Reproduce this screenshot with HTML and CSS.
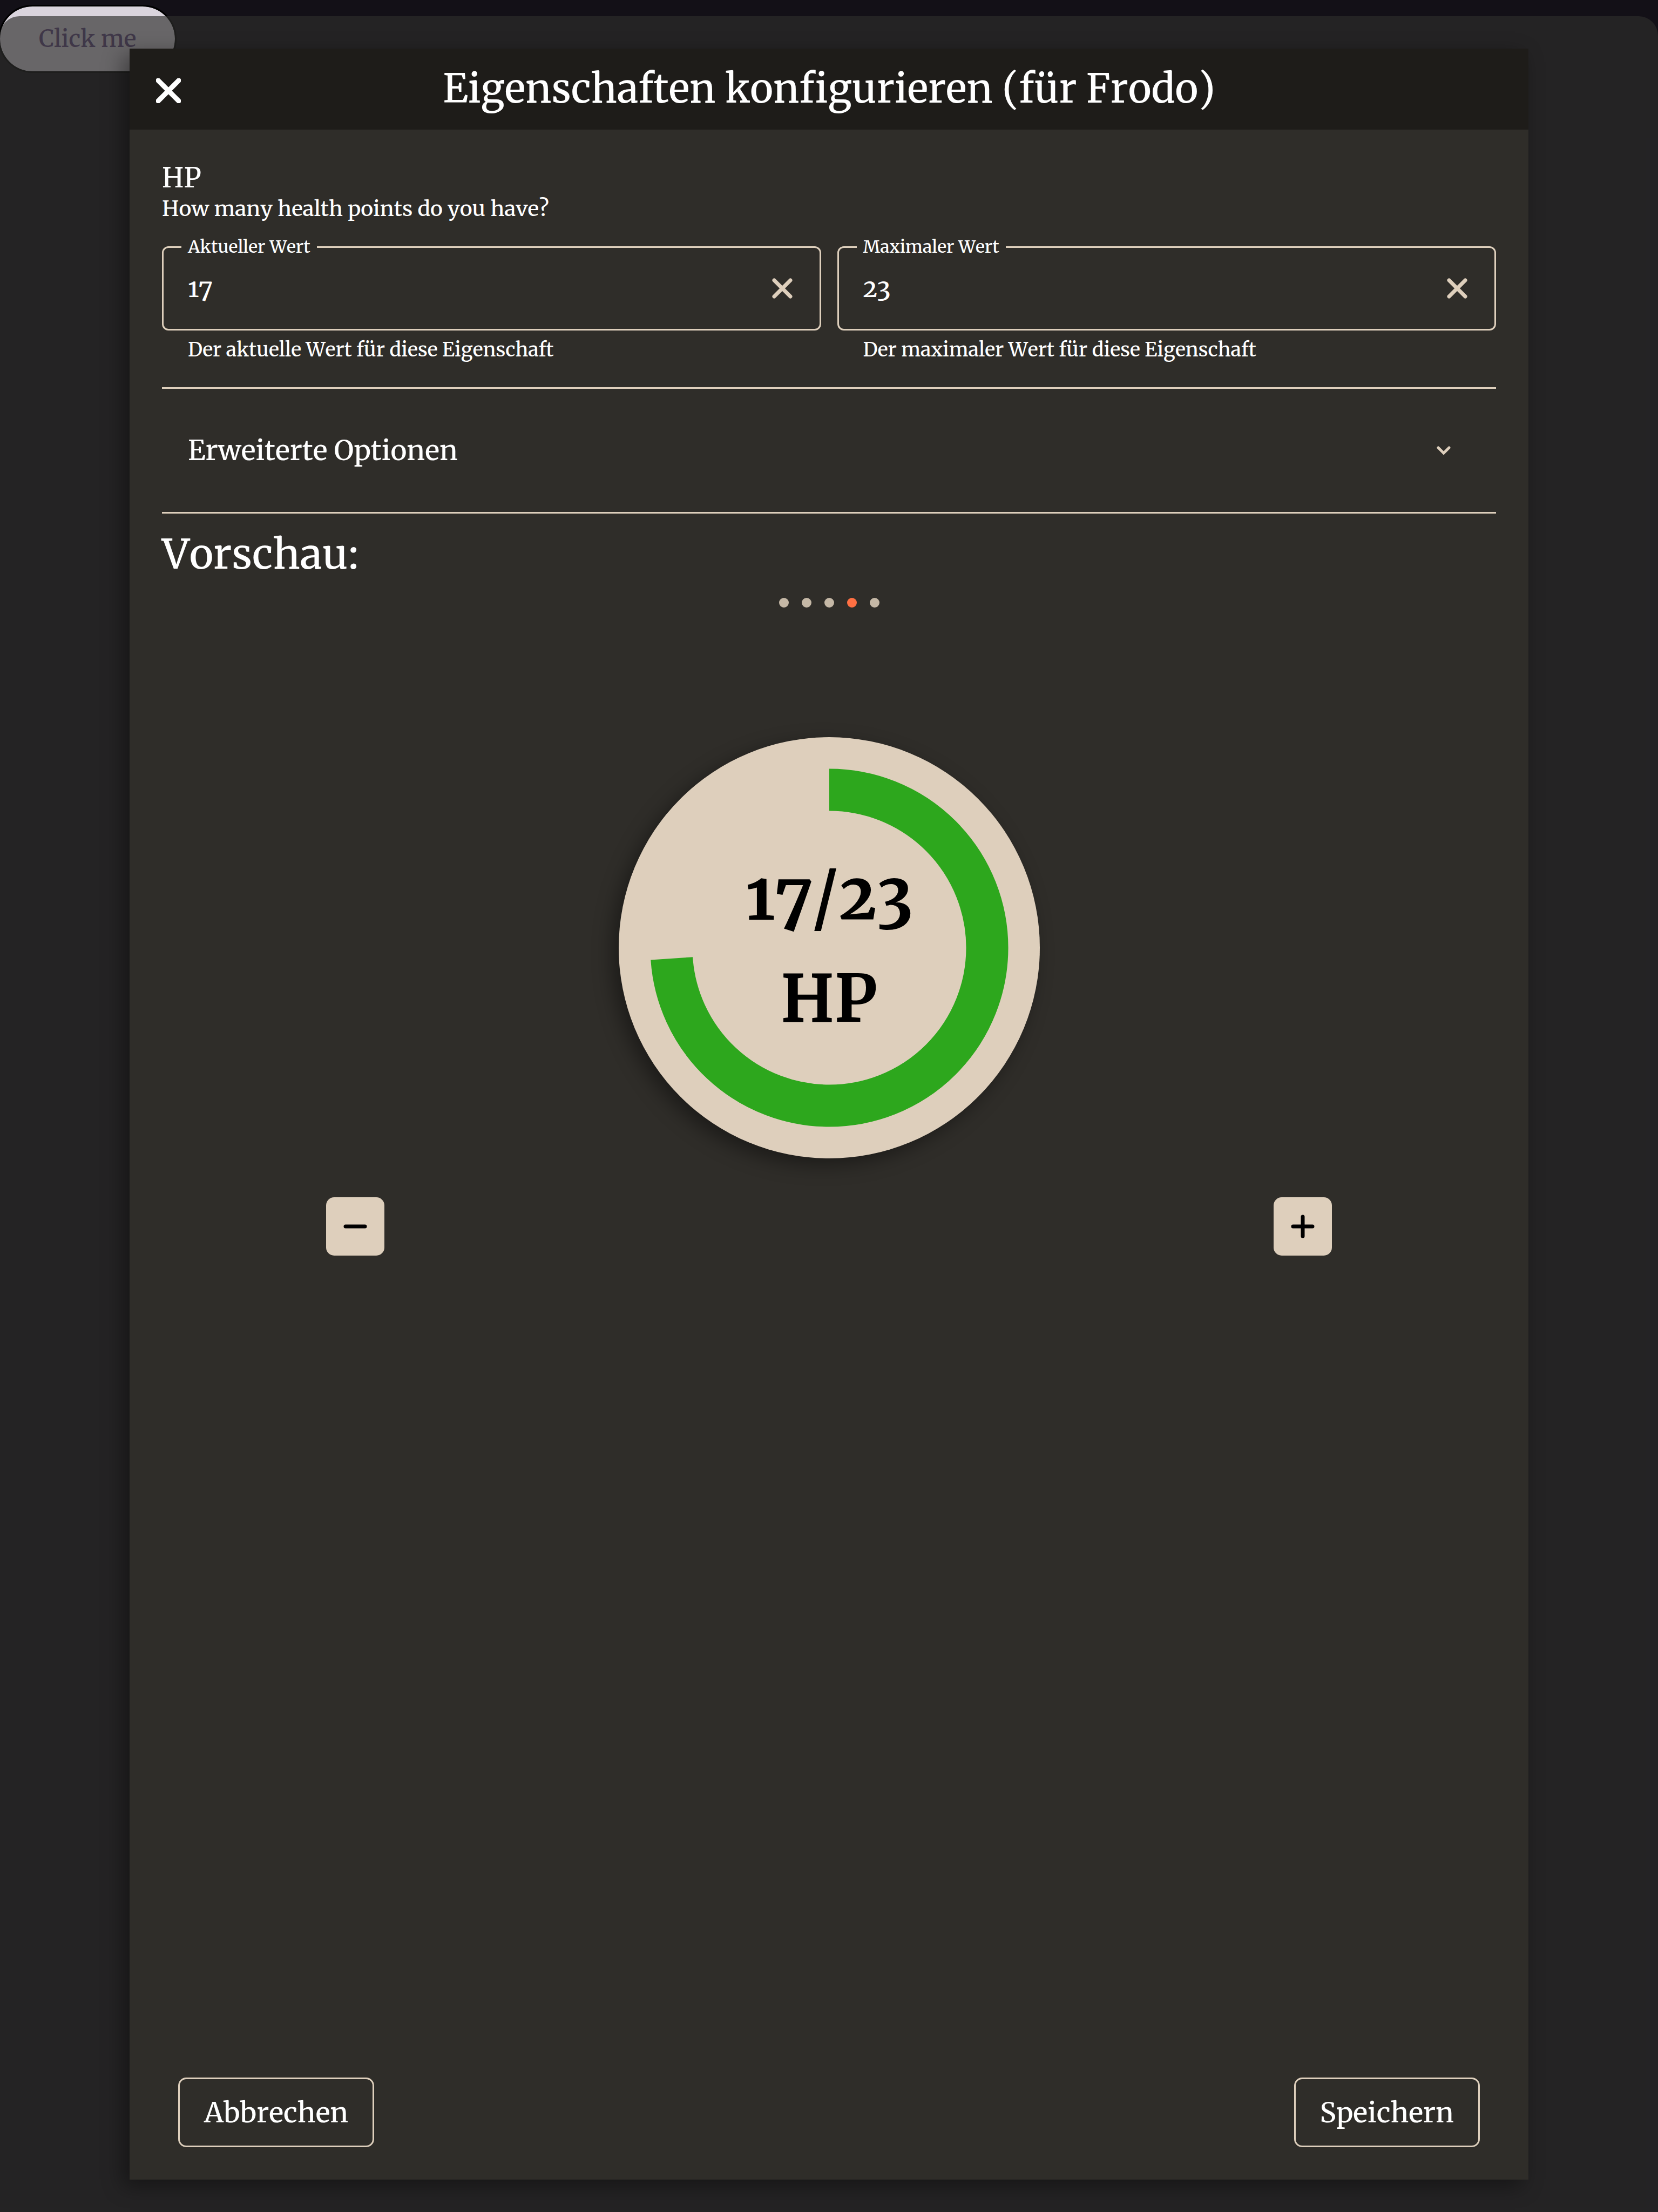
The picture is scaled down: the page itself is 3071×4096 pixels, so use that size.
FILE: index.html
```html
<!DOCTYPE html>
<html lang="de">
<head>
<meta charset="utf-8">
<title>Eigenschaften konfigurieren</title>
<link rel="stylesheet" href="styles.css">
</head>
<body>
<button class="launch" type="button">Click me</button>
<div class="backdrop">
  <section class="dialog" role="dialog" aria-labelledby="dialog-title">
    <header class="dialog-header">
      <button class="icon-button close" type="button" aria-label="Schließen">
        <svg class="icon-close" viewBox="0 0 46 46"><path d="M4 4 42 42M42 4 4 42"/></svg>
      </button>
      <h1 class="dialog-title" id="dialog-title">Eigenschaften konfigurieren (für Frodo)</h1>
    </header>
    <div class="dialog-body">
      <h2 class="property-name">HP</h2>
      <p class="property-text">How many health points do you have?</p>
      <div class="fields">
        <div class="field">
          <fieldset class="field-box">
            <legend class="field-legend"><label for="current">Aktueller Wert</label></legend>
            <div class="field-row">
              <input class="field-input" id="current" type="text" value="17">
              <button class="icon-button" type="button" aria-label="Leeren">
                <svg class="icon-clear" viewBox="0 0 46 46"><path d="M8 8 38 38M38 8 8 38"/></svg>
              </button>
            </div>
          </fieldset>
          <p class="field-help">Der aktuelle Wert für diese Eigenschaft</p>
        </div>
        <div class="field">
          <fieldset class="field-box">
            <legend class="field-legend"><label for="maximum">Maximaler Wert</label></legend>
            <div class="field-row">
              <input class="field-input" id="maximum" type="text" value="23">
              <button class="icon-button" type="button" aria-label="Leeren">
                <svg class="icon-clear" viewBox="0 0 46 46"><path d="M8 8 38 38M38 8 8 38"/></svg>
              </button>
            </div>
          </fieldset>
          <p class="field-help">Der maximaler Wert für diese Eigenschaft</p>
        </div>
      </div>
      <button class="options" type="button" aria-expanded="false">
        <span>Erweiterte Optionen</span>
        <svg class="icon-chevron" viewBox="0 0 26 16"><path d="M3 3 13 13 23 3"/></svg>
      </button>
      <h2 class="preview-title">Vorschau:</h2>
      <div class="dots">
        <span class="dot"></span><span class="dot"></span><span class="dot"></span><span class="dot active"></span><span class="dot"></span>
      </div>
      <div class="gauge">
        <svg class="gauge-ring" viewBox="0 0 780 780">
          <circle cx="390" cy="390" r="292.5" pathLength="23" stroke-dasharray="17 23" transform="rotate(-90 390 390)"/>
        </svg>
        <p class="gauge-text">17/23<br>HP</p>
      </div>
      <div class="steppers">
        <button class="stepper" type="button" aria-label="Weniger">
          <svg class="icon-step" viewBox="0 0 44 44"><path d="M4 22H40"/></svg>
        </button>
        <button class="stepper" type="button" aria-label="Mehr">
          <svg class="icon-step" viewBox="0 0 44 44"><path d="M4 22H40M22 4V40"/></svg>
        </button>
      </div>
      <footer class="actions">
        <button class="action" type="button">Abbrechen</button>
        <button class="action" type="button">Speichern</button>
      </footer>
    </div>
  </section>
</div>
</body>
</html>
```
FILE: styles.css
```css
* {
  box-sizing: border-box;
}

:root {
  --sand: #decfbc;
  --panel: #2f2d29;
  --header: #1e1c19;
}

body {
  margin: 0;
  min-height: 100vh;
  padding-top: 12px;
  background: #131017;
  color: #fff;
  font-family: Merriweather, "DejaVu Serif Condensed", "DejaVu Serif", serif;
  font-size: 36px;
  font-weight: 500;
  font-kerning: none;
  font-optical-sizing: none;
  font-variant-numeric: oldstyle-nums;
}

h1, h2, p {
  margin: 0;
  font-weight: 500;
}

button, input {
  font-family: inherit;
  font-size: inherit;
  font-weight: inherit;
  font-kerning: inherit;
  font-optical-sizing: inherit;
  font-variant-numeric: inherit;
  color: inherit;
  background: none;
  border: 0;
  padding: 0;
}

svg {
  display: block;
  fill: none;
  stroke: currentColor;
}

.launch {
  display: block;
  height: 120px;
  padding: 0 72px;
  border-radius: 60px;
  outline: 3px solid #000;
  background: #dad4dd;
  color: #624a80;
  font-size: 43px;
}

.backdrop {
  position: absolute;
  inset: 30px 0 0;
  display: flex;
  padding: 60px 240px;
  border-radius: 36px 36px 0 0;
  background: rgba(45, 45, 44, 0.663);
}

.dialog {
  flex: 1;
  display: flex;
  flex-direction: column;
  background: var(--panel);
  box-shadow: -12px 12px 36px rgba(0, 0, 0, 0.4);
}

.dialog-header {
  display: grid;
  grid-template-columns: 96px 1fr 96px;
  align-items: center;
  height: 150px;
  padding: 0 24px;
  background: var(--header);
}

.dialog-title {
  line-height: 108px;
  padding-bottom: 3px;
  font-size: 73px;
  text-align: center;
}

.icon-button {
  display: grid;
  place-items: center;
  width: 96px;
  height: 96px;
}

.close {
  padding-top: 6px;
}

.icon-close {
  width: 46px;
  height: 46px;
  stroke-width: 9;
  stroke-linecap: round;
}

.icon-clear {
  width: 46px;
  height: 46px;
  color: var(--sand);
  stroke-width: 7;
  stroke-linecap: round;
}

.dialog-body {
  flex: 1;
  display: flex;
  flex-direction: column;
  padding: 60px;
}

.property-name {
  font-size: 50px;
  line-height: 60px;
}

.property-text {
  font-size: 39px;
  line-height: 54px;
}

.fields {
  display: grid;
  grid-template-columns: 1fr 1fr;
  gap: 30px;
  margin-top: 22px;
}

.field-box {
  margin: 0;
  padding: 0 21px 19px 33px;
  border: 3px solid var(--sand);
  border-radius: 12px;
}

.field-legend {
  padding: 0 12px;
  font-size: 32px;
  line-height: 42px;
}

.field-row {
  display: flex;
  align-items: center;
  height: 112px;
  padding-left: 12px;
}

.field-input {
  flex: 1;
  min-width: 0;
  font-size: 46px;
}

.field-help {
  margin-top: 12px;
  padding-left: 48px;
  font-size: 36px;
  line-height: 48px;
}

.options {
  display: flex;
  align-items: center;
  justify-content: space-between;
  height: 234px;
  margin-top: 45px;
  padding: 0 84px 0 48px;
  border-top: 3px solid var(--sand);
  border-bottom: 3px solid var(--sand);
  font-size: 51px;
}

.icon-chevron {
  width: 26px;
  height: 16px;
  color: var(--sand);
  stroke-width: 5;
  stroke-linecap: round;
}

.preview-title {
  margin-top: 21px;
  font-size: 76px;
  line-height: 108px;
}

.dots {
  display: flex;
  justify-content: center;
  gap: 24px;
  margin-top: 27px;
}

.dot {
  width: 18px;
  height: 18px;
  border-radius: 50%;
  background: #c5b8a6;
}

.dot.active {
  background: #ff7043;
}

.gauge {
  display: grid;
  align-self: center;
  align-items: center;
  width: 780px;
  height: 780px;
  margin-top: 240px;
  border-radius: 50%;
  background: var(--sand);
  box-shadow: -12px 12px 36px rgba(0, 0, 0, 0.4);
  color: #000;
}

.gauge-ring,
.gauge-text {
  grid-area: 1 / 1;
}

.gauge-ring {
  stroke: #2da71d;
  stroke-width: 78;
}

.gauge-text {
  font-size: 120px;
  font-weight: 700;
  line-height: 189px;
  text-align: center;
}

.steppers {
  display: flex;
  justify-content: space-between;
  margin-top: 72px;
  padding: 0 304px;
}

.stepper {
  display: grid;
  place-items: center;
  width: 108px;
  height: 108px;
  border-radius: 15px;
  background: var(--sand);
  color: #000;
}

.icon-step {
  width: 44px;
  height: 44px;
  stroke-width: 7;
  stroke-linecap: round;
}

.actions {
  display: flex;
  justify-content: space-between;
  margin-top: auto;
  padding: 0 30px;
}

.action {
  height: 129px;
  padding: 0 45px;
  border: 3px solid var(--sand);
  border-radius: 15px;
  font-size: 51px;
}
```
